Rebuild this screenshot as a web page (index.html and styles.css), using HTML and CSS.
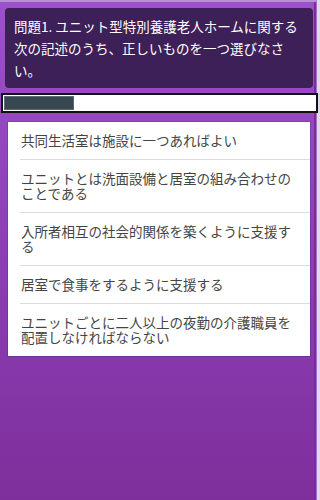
FILE: index.html
```html
<!DOCTYPE html>
<html lang="ja">
<head>
<meta charset="utf-8">
<title>問題1</title>
<link rel="stylesheet" href="styles.css">
</head>
<body>
<div class="page">
  <div class="question">問題1. ユニット型特別養護老人ホームに関する次の記述のうち、正しいものを一つ選びなさい。</div>
  <div class="progress"><div class="progress-fill" style="width:22.6%"></div></div>
  <ul class="choices">
    <li class="choice">共同生活室は施設に一つあればよい</li>
    <li class="choice">ユニットとは洗面設備と居室の組み合わせのことである</li>
    <li class="choice">入所者相互の社会的関係を築くように支援する</li>
    <li class="choice">居室で食事をするように支援する</li>
    <li class="choice">ユニットごとに二人以上の夜勤の介護職員を配置しなければならない</li>
  </ul>
</div>
</body>
</html>
```
FILE: styles.css
```css
html {
  background: #e2d8ea;
}
body {
  margin: 0;
  font-family: "Noto Sans CJK JP", "Noto Sans", sans-serif;
}
.page {
  width: 317px;
  height: 500px;
  box-sizing: border-box;
  background: linear-gradient(to bottom, #9c50cb 0%, #8a3bb0 60%, #7e2f9b 100%);
  border-top: 2px solid #b98fd6;
  border-right: 1px solid #a66fcf;
  box-shadow: inset -2px 0 0 #7a2c98;
  padding-top: 6px;
}
.question {
  margin: 0 3px 0 5px;
  background: #3d2057;
  border-radius: 4px;
  color: #fff;
  font-size: 13.5px;
  line-height: 22px;
  padding: 7px 12px 7px 9px;
}
.progress {
  margin: 5px 0 0 1px;
  width: 317px;
  box-sizing: border-box;
  border: 2px solid #111;
  background: #fff;
  padding: 1px;
  position: relative;
  z-index: 1;
}
.progress-fill {
  height: 14px;
  box-sizing: border-box;
  background: #37474f;
  border: 1px solid #5b6b73;
}
.choices {
  list-style: none;
  margin: 9px 6px 0 8px;
  padding: 0;
  background: #fff;
  box-shadow: 0 0 0 1px rgba(0, 0, 0, 0.12);
}
.choice {
  margin-left: 12px;
  padding: 11px 13px 11px 1px;
  font-size: 13.5px;
  line-height: 15px;
  color: #444;
  border-bottom: 1px solid #dcdcdc;
}
.choice:last-child {
  border-bottom: none;
}
```
